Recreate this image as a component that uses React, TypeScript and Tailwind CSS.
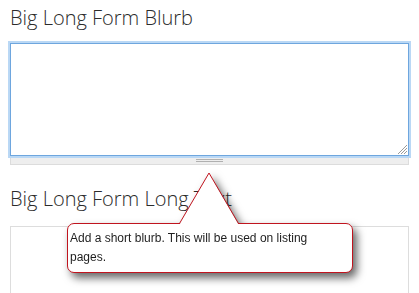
import React from "react";

function ResizeGrip() {
  return (
    <svg
      className="absolute bottom-0 right-0"
      width="12"
      height="12"
      viewBox="0 0 12 12"
    >
      <path d="M11 2 L2 11" stroke="#9a9a9a" strokeWidth="1" />
      <path d="M11 5 L5 11" stroke="#9a9a9a" strokeWidth="1" />
      <path d="M11 8 L8 11" stroke="#9a9a9a" strokeWidth="1" />
    </svg>
  );
}

function Tooltip() {
  return (
    <div className="absolute left-[67px] top-[172px] drop-shadow-[4px_5px_4px_rgba(0,0,0,0.6)]">
      {/* Arrow pointing up at the resize handle */}
      <svg
        className="absolute left-[112px] top-0 z-10"
        width="60"
        height="53"
        viewBox="0 0 60 53"
      >
        <path d="M0.5 52.5 L30 1 L59.5 52.5 Z" fill="white" />
        <path
          d="M0.5 51.5 L30 1 L59.5 51.5"
          fill="none"
          stroke="#c0141e"
          strokeWidth="1"
        />
      </svg>
      <div className="mt-[51px] h-[50px] w-[286px] rounded-[7px] border border-[#c0141e] bg-white pl-[2px] pt-[5px]">
        <p className="w-[262px] font-['Liberation_Sans',Arial,sans-serif] text-[12px] leading-[19px] text-[#1e1e1e]">
          Add a short blurb. This will be used on listing pages.
        </p>
      </div>
    </div>
  );
}

export default function App() {
  return (
    <div className="relative h-[293px] w-[419px] overflow-hidden bg-white px-[10px] pt-[4px] font-['Open_Sans',sans-serif] text-[#2b2b2b]">
      {/* Blurb field */}
      <h2 className="text-[20px] font-light leading-[28px]">
        Big Long Form Blurb
      </h2>
      <div className="mt-[11px] w-[399px]">
        <div className="relative h-[113px] border border-[#6ea6de] bg-white shadow-[0_0_0_2px_#bad8f5]">
          <ResizeGrip />
        </div>
        <div className="flex h-[9px] items-center justify-center border border-t-0 border-[#dcdcdc] bg-[#eeeeee]">
          <div className="flex w-[27px] flex-col gap-[1px]">
            <div className="h-px bg-[#b0b0b0]" />
            <div className="h-px bg-[#b0b0b0]" />
          </div>
        </div>
      </div>

      {/* Long text field */}
      <h2 className="mt-[20px] text-[20px] font-light leading-[28px]">
        Big Long Form Long Text
      </h2>
      <div className="mt-[13px] h-[100px] w-[399px] border border-[#dddddd] bg-white" />

      <Tooltip />
    </div>
  );
}
